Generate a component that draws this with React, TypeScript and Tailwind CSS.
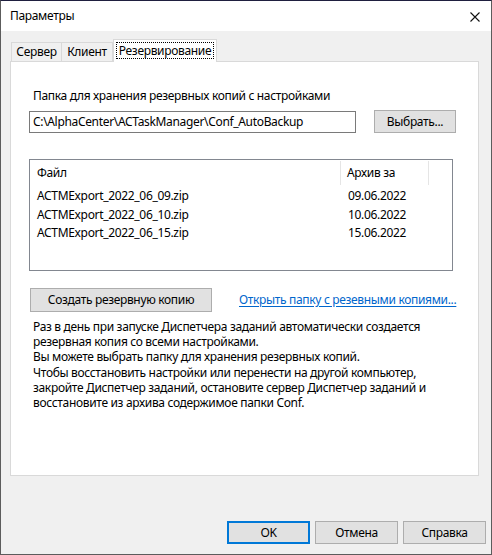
import React from "react";

const F = { fontFamily: '"Noto Sans", "Liberation Sans", sans-serif' };

function Btn({ children, w, h = 23, def = false }: { children: React.ReactNode; w: string; h?: number; def?: boolean }) {
  return (
    <div
      className={`flex items-center justify-center bg-[#e1e1e1] text-black ${w} ${
        def ? "border-2 border-[#0078d7]" : "border border-[#adadad]"
      }`}
      style={{ height: h }}
    >
      {children}
    </div>
  );
}

export default function App() {
  const rows = [
    ["ACTMExport_2022_06_09.zip", "09.06.2022"],
    ["ACTMExport_2022_06_10.zip", "10.06.2022"],
    ["ACTMExport_2022_06_15.zip", "15.06.2022"],
  ];
  const para = [
    "Раз в день при запуске Диспетчера заданий автоматически создается",
    "резервная копия со всеми настройками.",
    "Вы можете выбрать папку для хранения резервных копий.",
    "Чтобы восстановить настройки или перенести на другой компьютер,",
    "закройте Диспетчер заданий, остановите сервер Диспетчер заданий и",
    "восстановите из архива содержимое папки Conf.",
  ];
  return (
    <div
      className="w-[492px] h-[555px] flex flex-col bg-[#f0f0f0] border border-[#5c5c5c] border-t-[#1f1f3f] text-[12px] tracking-[-0.33px] text-black overflow-hidden"
      style={F}
    >
      {/* Title bar */}
      <div className="h-[30px] bg-white flex items-center justify-between pl-[9px] pr-[11px] shrink-0">
        <span className="text-[12px] leading-none">Параметры</span>
        <svg width="10" height="10" viewBox="0 0 10 10" className="mt-[1px]">
          <path d="M0.5 0.5 L9.5 9.5 M9.5 0.5 L0.5 9.5" stroke="#111" strokeWidth="1.1" />
        </svg>
      </div>

      {/* Body */}
      <div className="flex flex-col flex-1">
        {/* Tabs */}
        <div className="flex items-end pl-[10px] mt-[8px] h-[22px] relative z-10">
          <div className="w-[51px] h-[19px] border border-b-0 border-[#d9d9d9] bg-[#f0f0f0] flex items-center justify-center">
            Сервер
          </div>
          <div className="w-[51px] h-[19px] border border-b-0 border-l-0 border-[#d9d9d9] bg-[#f0f0f0] flex items-center justify-center">
            Клиент
          </div>
          <div className="w-[104px] h-[23px] border border-b-0 border-[#d9d9d9] bg-white flex items-start justify-center pt-[2px] -mb-px">
            <span className="border border-dotted border-black px-[2px] leading-[15px]">Резервирование</span>
          </div>
        </div>

        {/* Panel */}
        <div className="ml-[9px] w-[469px] h-[415px] bg-white border border-[#d9d9d9] flex flex-col pl-[18px] shrink-0">
          <div className="mt-[26px] leading-[15px] pl-[4px]">Папка для хранения резервных копий с настройками</div>
          <div className="flex items-center mt-[7px]">
            <div className="w-[327px] h-[22px] border border-[#7a7a7a] flex items-center pl-[3px]">
              C:\AlphaCenter\ACTaskManager\Conf_AutoBackup
            </div>
            <div className="ml-[18px]">
              <Btn w="w-[82px]">Выбрать...</Btn>
            </div>
          </div>

          {/* List */}
          <div className="mt-[26px] w-[424px] h-[112px] border border-[#828790] flex flex-col">
            <div className="flex h-[24px] mt-[1px] items-center">
              <div className="w-[311px] pl-[7px] h-full flex items-center border-r border-[#e5e5e5]">Файл</div>
              <div className="w-[88px] pl-[6px] h-full flex items-center border-r border-[#e5e5e5]">Архив за</div>
            </div>
            <div className="flex flex-col mt-[2px]">
              {rows.map(([f, d]) => (
                <div key={f} className="flex h-[18.5px] items-center">
                  <div className="w-[312px] pl-[7px]">{f}</div>
                  <div className="pl-[6px]">{d}</div>
                </div>
              ))}
            </div>
          </div>

          {/* Actions */}
          <div className="flex items-center mt-[17px]">
            <div className="ml-[1px]">
              <Btn w="w-[182px]" h={24}>Создать резервную копию</Btn>
            </div>
            <span className="ml-[27px] text-[#0066cc] underline underline-offset-2">
              Открыть папку с резевными копиями...
            </span>
          </div>

          <div className="mt-[7px] pl-[4px] flex flex-col">
            {para.map((l) => (
              <div key={l} className="h-[15.2px] leading-[15.2px] whitespace-nowrap">
                {l}
              </div>
            ))}
          </div>
        </div>

        {/* Bottom buttons */}
        <div className="flex justify-end gap-[5px] pr-[5px] mt-[45px]">
          <Btn w="w-[83px]" def>OK</Btn>
          <Btn w="w-[83px]">Отмена</Btn>
          <Btn w="w-[83px]">Справка</Btn>
        </div>
      </div>
    </div>
  );
}
